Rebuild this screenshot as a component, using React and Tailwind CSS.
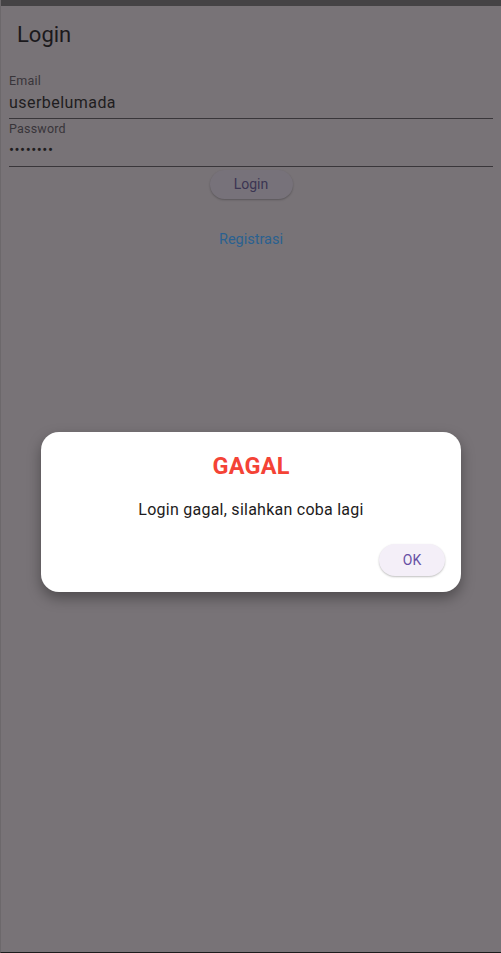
import React from 'react';

// Halaman login dengan dialog gagal di atasnya (scrim gelap)
const Field = ({ label, value, dots }) => (
    <div className="flex flex-col pt-[2px]">
        <span className="text-[12.5px] leading-[16px] text-[#38353a] tracking-[0.2px]">{label}</span>
        <div className="h-[30px] pt-[3px] border-b border-[#39363a]">
            {dots ? (
                <span className="block text-[15px] leading-[22px] tracking-[0.5px] text-[#1f1d20] -translate-y-[1px]">••••••••</span>
            ) : (
                <span className="block text-[16px] leading-[22px] text-[#1f1d20] tracking-[0.45px]">{value}</span>
            )}
        </div>
    </div>
);

const App = () => {
    return (
        <div
            className="relative w-[501px] h-[953px] overflow-hidden bg-[#787377] border-l border-[#6c686b] border-b border-b-[#1c1b1c]"
            style={{ fontFamily: 'Roboto, "Noto Sans", sans-serif' }}
        >
            <div className="h-[6px] bg-[#454345]" />
            <div className="h-[56px] flex items-center px-[16px]">
                <h1 className="text-[22px] text-[#1b191c] font-normal">Login</h1>
            </div>

            <div className="px-[8px] pt-[9px]">
                <Field label="Email" value="userbelumada" />
                <Field label="Password" dots />
                <div className="flex justify-center mt-[3px]">
                    <button className="h-[29px] w-[83px] rounded-full bg-[#77727a] shadow-[0_1px_2px_rgba(0,0,0,0.25)] text-[14px] text-[#3b3552]">
                        Login
                    </button>
                </div>
                <div className="flex justify-center mt-[30px]">
                    <span className="text-[14.5px] text-[#2a6190]">Registrasi</span>
                </div>
            </div>

            <div className="absolute left-[40px] top-[432px] w-[420px] h-[160px] bg-white rounded-[18px] shadow-[0_6px_14px_rgba(0,0,0,0.35)] flex flex-col items-center">
                <h2 className="mt-[20px] text-[23.5px] font-bold text-[#f44336] tracking-[0.2px] leading-[28px]">GAGAL</h2>
                <p className="mt-[19px] text-[16px] text-[#1d1b20] tracking-[0.25px] leading-[22px]">Login gagal, silahkan coba lagi</p>
                <div className="w-full flex justify-end pr-[16px] mt-[23px]">
                    <button className="h-[32px] w-[66px] rounded-full bg-[#f4eff8] shadow-[0_1px_2px_rgba(0,0,0,0.25)] text-[14px] text-[#6750a4]">
                        OK
                    </button>
                </div>
            </div>
        </div>
    );
};

export default App;
